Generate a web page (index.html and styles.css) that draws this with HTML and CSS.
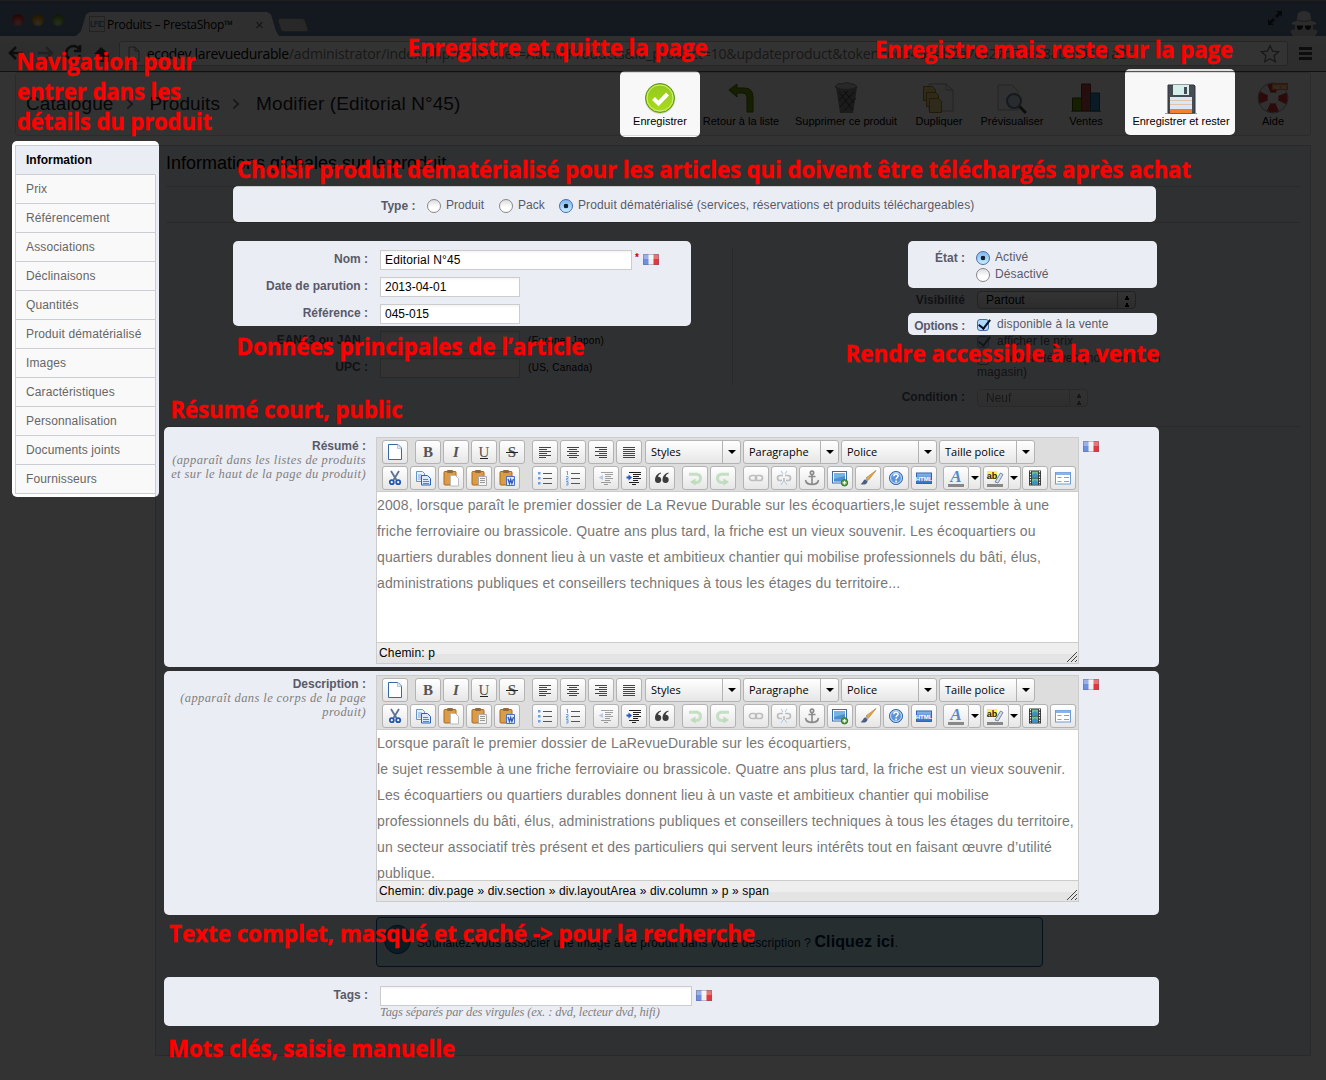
FILE: index.html
```html
<!DOCTYPE html>
<html lang="fr">
<head>
<meta charset="utf-8">
<title>Produits – PrestaShop™</title>
<link rel="stylesheet" href="styles.css">
</head>
<body>
<svg class="sprite" width="0" height="0">
  <defs>
    <linearGradient id="g-blue" x1="0" y1="0" x2="0" y2="1"><stop offset="0" stop-color="#8db9ee"/><stop offset="1" stop-color="#2f6fbf"/></linearGradient>
    <linearGradient id="g-green" x1="0" y1="0" x2="0" y2="1"><stop offset="0" stop-color="#94c81e"/><stop offset="1" stop-color="#a9dc1b"/></linearGradient>
    <symbol id="i-new" viewBox="0 0 20 20"><path d="M3.500 2.500h9.500l3.500 3.500v11.500h-13z" fill="#fff" stroke="#36699f"/><path d="M12.500 2.500v4h4" fill="#dfe9f5" stroke="#9bb6d3" stroke-width=".7"/></symbol>
    <symbol id="i-bold" viewBox="0 0 20 20"><text x="10" y="15" class="glyph glyph-b">B</text></symbol>
    <symbol id="i-italic" viewBox="0 0 20 20"><text x="10" y="15" class="glyph glyph-i">I</text></symbol>
    <symbol id="i-under" viewBox="0 0 20 20"><text x="10" y="15" class="glyph">U</text><path d="M6 16.500h8" stroke="#222"/></symbol>
    <symbol id="i-strike" viewBox="0 0 20 20"><text x="10" y="15" class="glyph glyph-b">S</text><path d="M4 10.500h12" stroke="#222"/></symbol>
    <symbol id="i-left" viewBox="0 0 20 20"><path d="M4 5.500h12M4 7.500h8M4 9.500h12M4 11.500h8M4 13.500h12M4 15.500h7" stroke="#444"/></symbol>
    <symbol id="i-center" viewBox="0 0 20 20"><path d="M4 5.500h12M6 7.500h8M4 9.500h12M6 11.500h8M4 13.500h12M6 15.500h8" stroke="#444"/></symbol>
    <symbol id="i-right" viewBox="0 0 20 20"><path d="M4 5.500h12M8 7.500h8M4 9.500h12M8 11.500h8M4 13.500h12M8 15.500h8" stroke="#444"/></symbol>
    <symbol id="i-full" viewBox="0 0 20 20"><path d="M4 5.500h12M4 7.500h12M4 9.500h12M4 11.500h12M4 13.500h12M4 15.500h12" stroke="#444"/></symbol>
    <symbol id="i-cut" viewBox="0 0 20 20"><path d="M6 3l5.500 9M14 3l-5.500 9" stroke="#5c7391" stroke-width="1.800"/><circle cx="6.800" cy="14.200" r="2" fill="#fff" stroke="#2356b0" stroke-width="1.800"/><circle cx="13.200" cy="14.200" r="2" fill="#fff" stroke="#2356b0" stroke-width="1.800"/></symbol>
    <symbol id="i-copy" viewBox="0 0 20 20"><path d="M3.500 3.500h6l2 2v8h-8z" fill="#e8f1fb" stroke="#6a93c8"/><path d="M5 7h4M5 9h4M5 11h4" stroke="#7ea6d8"/><path d="M8.500 7.500h6l3 3v6.500h-9z" fill="#dceafb" stroke="#2d62b0"/><path d="M10 11.500h5M10 13.500h6M10 15.500h6" stroke="#4d86cf"/></symbol>
    <symbol id="i-board" viewBox="0 0 20 20"><rect x="3" y="3.500" width="12" height="13.500" rx="1" fill="#dc9b45" stroke="#a8691f"/><rect x="6" y="2" width="6" height="3" rx="1" fill="#8d6a3d"/></symbol>
    <symbol id="i-paste" viewBox="0 0 20 20"><use href="#i-board"/><path d="M9.500 7.500h5l3 3v7.500h-8z" fill="#fff" stroke="#bbb"/></symbol>
    <symbol id="i-pastet" viewBox="0 0 20 20"><use href="#i-board"/><path d="M9.500 8.500h8v9h-8z" fill="#f4f4f4" stroke="#aaa"/><path d="M11 10.500h5M11 12.500h5M11 14.500h5" stroke="#999"/></symbol>
    <symbol id="i-pastew" viewBox="0 0 20 20"><use href="#i-board"/><path d="M9.500 8.500h8v9h-8z" fill="#e3ebfa" stroke="#4a6ec0"/><path d="M11 11l1.500 4.500 1.200-4 1.200 4L16.500 11" fill="none" stroke="#3257b5" stroke-width="1.300"/></symbol>
    <symbol id="i-ul" viewBox="0 0 20 20"><path d="M8 5.500h9M8 10.500h9M8 15.500h9" stroke="#555"/><path d="M3 4h2.500v2.500H3zM3 9h2.500v2.500H3zM3 14h2.500v2.500H3z" fill="#6f9fe0"/></symbol>
    <symbol id="i-ol" viewBox="0 0 20 20"><path d="M8 5.500h9M8 10.500h9M8 15.500h9" stroke="#555"/><path d="M4.500 3v4M3.500 3.500h1M3 8.500h2v2H3.500v1.500H5.500M3 13.500h2v3.500H3M3.500 15.200h1.500" fill="none" stroke="#6f9fe0"/></symbol>
    <symbol id="i-outdent" viewBox="0 0 20 20"><g opacity=".4"><path d="M5 4.500h12M9 6.500h8M9 8.500h6M9 10.500h8M9 12.500h5M5 14.500h10M8 16.500h4" stroke="#222"/><path d="M7 7v5L2.500 9.500z" fill="#6a90d0"/></g></symbol>
    <symbol id="i-indent" viewBox="0 0 20 20"><path d="M5 4.500h12M9 6.500h8M9 8.500h6M9 10.500h8M9 12.500h5M5 14.500h10M8 16.500h4" stroke="#222"/><path d="M2.500 9.500H5" stroke="#2558c4" stroke-width="2"/><path d="M4.500 6.500v6L8 9.500z" fill="#2558c4"/></symbol>
    <symbol id="i-quote" viewBox="0 0 20 20"><path d="M9 4.500C5 5.500 3 8.500 3 12a3.100 3.100 0 1 0 3-3.200C6.300 7 7.500 5.800 9 5.400zM16.500 4.500c-4 1-6 4-6 7.500a3.100 3.100 0 1 0 3-3.200c.3-1.800 1.500-3 3-3.400z" fill="#3c3c3c"/></symbol>
    <symbol id="i-undo" viewBox="0 0 20 20"><path d="M4 6.200h8a4.200 4.200 0 0 1 0 8.300H9" fill="none" stroke="#c4dfc4" stroke-width="3"/><path d="M10.500 10.500v7L5 14z" fill="#bcdcbc"/></symbol>
    <symbol id="i-redo" viewBox="0 0 20 20"><path d="M16 6.200H8a4.200 4.200 0 0 0 0 8.300h3" fill="none" stroke="#c4dfc4" stroke-width="3"/><path d="M10.500 10.500v7L16 14z" fill="#bcdcbc"/></symbol>
    <symbol id="i-link" viewBox="0 0 20 20"><g fill="none" stroke="#bdbdbd" stroke-width="1.700"><rect x="3.500" y="7.500" width="7" height="5" rx="2.500"/><rect x="9.500" y="7.500" width="7" height="5" rx="2.500"/></g></symbol>
    <symbol id="i-unlink" viewBox="0 0 20 20"><g fill="none" stroke="#bdbdbd" stroke-width="1.700"><path d="M9 7.500H6a2.500 2.500 0 0 0 0 5h2M11 7.500h3a2.500 2.500 0 0 1 0 5h-2M10 10v4"/></g><path d="M7 3l2 3M13 3l-2 3M7 17l2-3M13 17l-2-3" stroke="#a7c5ea"/></symbol>
    <symbol id="i-anchor" viewBox="0 0 20 20"><g fill="none" stroke="#8a8a8a" stroke-width="1.600"><circle cx="10" cy="4.800" r="1.700"/><path d="M10 6.500v10M6.500 8.500h7M3.500 12c.5 3 3 4.500 6.500 4.500s6-1.500 6.500-4.500"/></g></symbol>
    <symbol id="i-image" viewBox="0 0 20 20"><rect x="2.500" y="3.500" width="14" height="11.500" fill="#fff" stroke="#3a6baa"/><path d="M4 5h11v8.500H4z" fill="#74b3e4"/><path d="M4 11l11-3v5.500H4z" fill="#4b8fcc"/><circle cx="14.500" cy="14.800" r="3.200" fill="#5aa345" stroke="#33752a"/><path d="M12.700 14.800h3.600M14.500 13v3.600" stroke="#fff" stroke-width="1.200"/></symbol>
    <symbol id="i-brush" viewBox="0 0 20 20"><path d="M18 2.500l-7.500 9.500-2.500-2z" fill="#e4a94b" stroke="#b67b2a" stroke-width=".7"/><path d="M8.500 10l2.300 1.800-1.500 1.800-2.200-1.900z" fill="#aaa"/><path d="M7 11.500c-2 .5-1.500 3-4.500 4.500 3 1.200 7 .5 7-2.800z" fill="#4c5f80"/></symbol>
    <symbol id="i-help" viewBox="0 0 20 20"><circle cx="10" cy="10" r="6.600" fill="#5d93d8" stroke="#3d6fae"/><circle cx="10" cy="10" r="5.400" fill="none" stroke="#c9def5"/><path d="M7.800 8.200c0-3 4.500-2.700 4.300-.2-.1 1.500-2 1.600-2 3.300M10.100 12.600v1.600" fill="none" stroke="#fff" stroke-width="1.600"/></symbol>
    <symbol id="i-html" viewBox="0 0 20 20"><rect x="2.500" y="5" width="15" height="10.500" fill="url(#g-blue)" stroke="#2f66b0"/><text x="10" y="13" class="tag">HTML</text></symbol>
    <symbol id="i-color" viewBox="0 0 20 20"><text x="10" y="14" class="glyph glyph-a">A</text><path d="M2 16h16v3H2z" fill="#888"/></symbol>
    <symbol id="i-hilite" viewBox="0 0 20 20"><path d="M2 3h10v8H2z" fill="#fbf04f"/><text x="7" y="11" class="ab">ab</text><path d="M10 14l5.500-9 2.500 1.500-5 8.500z" fill="#d5dcea" stroke="#5b6f95" stroke-width=".8"/><path d="M2 16h16v3H2z" fill="#888"/></symbol>
    <symbol id="i-media" viewBox="0 0 20 20"><path d="M4 2.500h12v15H4z" fill="#333"/><path d="M7 3.500h6v6H7zM7 10.500h6v6H7z" fill="#6fc08b"/><path d="M7 7l3-2 3 2v2.500H7zM7 14l3-2 3 2v2.500H7z" fill="#3d90c8"/><path d="M5.500 3v14M14.500 3v14" stroke="#eee" stroke-width="1.200" stroke-dasharray="1.500 1.200"/></symbol>
    <symbol id="i-tmpl" viewBox="0 0 20 20"><rect x="2.500" y="4.500" width="15" height="11.500" fill="#fff" stroke="#6f9bd4"/><path d="M3 4.500h14v2.500H3z" fill="#8cb2e6"/><path d="M4.500 9.500h4M4.500 13.500h4M11 9.500h5M11 13.500h5" stroke="#7aa4da" stroke-width="1.200"/></symbol>
    <symbol id="i-flag" viewBox="0 0 16 11"><path d="M0 0h6v11H0z" fill="#6d8fe0"/><path d="M5.500 0h5v11h-5z" fill="#f0efec"/><path d="M10.500 0H16v11h-5.500z" fill="#e0383d"/><path d="M0 0h16v5H0z" fill="#fff" opacity=".3"/><path d="M.5.500h15v10H.5z" fill="none" stroke="#605a80" stroke-opacity=".35"/></symbol>
  </defs>
</svg>

<header class="browser">
  <div class="tabs">
    <i class="light red"></i><i class="light amber"></i><i class="light green"></i>
    <div class="tab"><span class="favicon">LRD</span><span class="tab-title">Produits – PrestaShop™</span><span class="tab-x">×</span></div>
    <i class="newtab"></i>
    <svg class="expand" width="16" height="16"><path d="M9 1h6v6l-2-2-3 3-2-2 3-3zM7 15H1V9l2 2 3-3 2 2-3 3z" fill="#20252d"/></svg>
    <svg class="spy" width="30" height="26"><path d="M9 3q6-4 12 0l1.500 8q4 .5 5.500 3l-5 1q-8 2-16 0l-5-1q1.500-2.500 5.500-3z" fill="#ddd"/><path d="M7 10q8 3 16 0" stroke="#888" fill="none"/><path d="M6 14q9 3 18 0v5l5 2-3 5H4l-3-5 5-2z" fill="#c9c9c9"/><path d="M8 15.500h6v1.500q-1 3-3.500 3T8 17zM16 15.500h6V17q-.5 3-3 3T16 17z" fill="#222"/></svg>
  </div>
  <div class="navbar">
    <svg class="navicons" width="100" height="24" fill="none" stroke-width="2.600"><path d="M15 11H3M8 5l-6 6 6 6" stroke="#444"/><path d="M30 11h13M38 5l6 6-6 6" stroke="#a5a5a5"/><path d="M71 7a7 7 0 1 0 1 6M72 3v6h-6" stroke="#444"/><path d="M86 12l7-7 8 7v8H88v-8z" fill="#444" stroke="none"/></svg>
    <div class="url">
      <svg width="12" height="16"><path d="M1 1h6l4 4v10H1zM7 1v4h4" fill="none" stroke="#888"/></svg>
      <span class="address"><b>ecodev.larevuedurable</b>/administrator/index.php?controller=AdminProducts&amp;id_product=10&amp;updateproduct&amp;token=ede45b4b2e7ce27d7c808abdf9671a2c</span>
      <svg class="star" width="20" height="19"><path d="M10 1.500l2.600 5.600 6 .7-4.500 4 1.300 6-5.400-3-5.400 3 1.300-6-4.500-4 6-.7z" fill="none" stroke="#777" stroke-width="1.300"/></svg>
    </div>
    <i class="burger"></i>
  </div>
</header>

<section class="pagehead">
  <h1 class="crumbs"><span>Catalogue</span><i></i><span>Produits</span><i></i><span>Modifier (Editorial N°45)</span></h1>
  <div class="actions">
    <a><svg width="32" height="32"><circle cx="16" cy="17" r="15" fill="#9b9b9b" opacity=".4"/><circle cx="16" cy="16" r="14.500" fill="url(#g-green)" stroke="#5a9a10"/><circle cx="16" cy="16" r="13" fill="none" stroke="#d2ee83"/><path d="M9.500 16.500l5 5 9-9.500" fill="none" stroke="#fff" stroke-width="4"/></svg>Enregistrer</a>
    <a><svg width="32" height="32"><path d="M4 8l8-6v4h7q9 0 9 9v15h-6V15q0-4-4-4h-6v4z" fill="#6d9d00" stroke="#486800"/></svg>Retour à la liste</a>
    <a><svg width="32" height="32"><path d="M6 5h21l-4 26H10z" fill="#858585"/><path d="M9 10l14 18M14 9l10 12M24 10L10 25M18 9l-9 9M26 16L14 29" stroke="#444"/><path d="M5 5q3-5 7-3 5-3 9 0 4-1 6 3-11 5-22 0z" fill="#c5c5c5" stroke="#888"/></svg>Supprimer ce produit</a>
    <a><svg width="32" height="32"><path d="M6 2h17l7 6v21H6z" fill="#f4f4f4" stroke="#aaa"/><path d="M23 2v6h7" fill="none" stroke="#aaa"/><g fill="#eed386" stroke="#a8811c"><path d="M.5 4.500h9l3 3v11H.500z"/><path d="M3.500 10.500h9l3 3v11h-12z"/><path d="M6.500 16.500h9l3 3v11h-12z"/></g></svg>Dupliquer</a>
    <a><svg width="32" height="32"><path d="M2 3h14l6 6v19H2z" fill="#f2f2f2" stroke="#b5b5b5"/><path d="M23 24l7 7" stroke="#444" stroke-width="3"/><circle cx="18" cy="19" r="7" fill="#c5d9ec" stroke="#6d819c" stroke-width="2"/></svg>Prévisualiser</a>
    <a><svg width="32" height="32"><path d="M2.500 16h9v13h-9z" fill="#70a000" stroke="#365500"/><path d="M11.500 2h9v27h-9z" fill="#c04545" stroke="#851f1f"/><path d="M20.500 11h9v18h-9z" fill="#3686b8" stroke="#145579"/><path d="M1 29.500h30" stroke="#777"/></svg>Ventes</a>
    <a><svg width="32" height="32"><path d="M0 31.500h32" stroke="#999"/><path d="M3 3h26l1 1v27H3z" fill="#474b54" stroke="#30343b"/><path d="M8 3h16v10H8z" fill="#d4efea"/><path d="M19 5h3v7h-3z" fill="#454b55"/><path d="M5 15h22v12H5z" fill="#d8e8fa"/><path d="M5 18.500h22M5 22.500h22" stroke="#e6b48a" opacity=".7"/><path d="M5 27h22v4H5z" fill="#ef8132"/></svg>Enregistrer et rester</a>
    <a><svg width="32" height="32"><circle cx="16" cy="16" r="10" fill="none" stroke="#eee" stroke-width="9"/><circle cx="16" cy="16" r="10" fill="none" stroke="#d93333" stroke-width="9" stroke-dasharray="8.700 7" stroke-dashoffset="4.300"/><circle cx="16" cy="16" r="15" fill="none" stroke="#999"/><path d="M15 1h16v7H15z" fill="#f0803a"/><text x="23" y="7" class="tag">NEW</text></svg>Aide</a>
  </div>
</section>

<main class="main">
  <nav class="side">
    <a class="on">Information</a><a>Prix</a><a>Référencement</a><a>Associations</a><a>Déclinaisons</a><a>Quantités</a><a>Produit dématérialisé</a><a>Images</a><a>Caractéristiques</a><a>Personnalisation</a><a>Documents joints</a><a>Fournisseurs</a>
  </nav>
  <section class="panel">
    <h2>Informations globales sur le produit</h2>
    <div class="type">
      <b>Type :</b><i class="radio"></i><span class="t1">Produit</span><i class="radio"></i><span class="t2">Pack</span><i class="radio on"></i><span class="t3">Produit dématérialisé (services, réservations et produits téléchargeables)</span>
    </div>
    <div class="cols">
      <div class="left">
        <div class="row"><label>Nom :</label><span class="input wide">Editorial N°45</span><sup>*</sup><svg width="16" height="11"><use href="#i-flag"/></svg></div>
        <div class="row"><label>Date de parution :</label><span class="input">2013-04-01</span></div>
        <div class="row"><label>Référence :</label><span class="input">045-015</span></div>
        <div class="row"><label>EAN13 ou JAN :</label><span class="input"></span><small>(Europe, Japon)</small></div>
        <div class="row"><label>UPC :</label><span class="input"></span><small>(US, Canada)</small></div>
      </div>
      <div class="right">
        <label>État :</label>
        <div class="state"><p><i class="radio on"></i>Activé</p><p><i class="radio"></i>Désactivé</p></div>
        <label class="lv">Visibilité</label>
        <div class="select s-vis"><span>Partout</span><i></i></div>
        <label class="lo">Options :</label>
        <div class="opts"><p><i class="check on"></i>disponible à la vente</p><p><i class="check on"></i>afficher le prix</p><p><i class="check"></i>exclusivité web (non vendu en</p><p>magasin)</p></div>
        <label class="lc">Condition :</label>
        <div class="select s-cond"><span>Neuf</span><i></i></div>
      </div>
    </div>
    <div class="field">
      <div class="legend"><b>Résumé :</b><em>(apparaît dans les listes de produits</em><em>et sur le haut de la page du produit)</em></div>
      <div class="editor">
        <div class="bars"></div>
        <div class="text"><p>2008, lorsque paraît le premier dossier de La Revue Durable sur les écoquartiers,le sujet ressemble à une</p><p>friche ferroviaire ou brassicole. Quatre ans plus tard, la friche est un vieux souvenir. Les écoquartiers ou</p><p>quartiers durables donnent lieu à un vaste et ambitieux chantier qui mobilise professionnels du bâti, élus,</p><p>administrations publiques et conseillers techniques à tous les étages du territoire...</p></div>
        <div class="status"><span>Chemin: p</span><svg width="12" height="12"><path d="M1 11L11 1M5 11l6-6M9 11l2-2" stroke="#444"/></svg></div>
      </div>
      <svg class="flag" width="16" height="11"><use href="#i-flag"/></svg>
    </div>
    <div class="field">
      <div class="legend"><b>Description :</b><em>(apparaît dans le corps de la page</em><em>produit)</em></div>
      <div class="editor">
        <div class="bars"></div>
        <div class="text"><p>Lorsque paraît le premier dossier de LaRevueDurable sur les écoquartiers,</p><p>le sujet ressemble à une friche ferroviaire ou brassicole. Quatre ans plus tard, la friche est un vieux souvenir.</p><p>Les écoquartiers ou quartiers durables donnent lieu à un vaste et ambitieux chantier qui mobilise</p><p>professionnels du bâti, élus, administrations publiques et conseillers techniques à tous les étages du territoire,</p><p>un secteur associatif très présent et des particuliers qui servent leurs intérêts tout en faisant œuvre d’utilité</p><p>publique.</p></div>
        <div class="status"><span>Chemin: div.page » div.section » div.layoutArea » div.column » p » span</span><svg width="12" height="12"><path d="M1 11L11 1M5 11l6-6M9 11l2-2" stroke="#444"/></svg></div>
      </div>
      <svg class="flag" width="16" height="11"><use href="#i-flag"/></svg>
    </div>
    <div class="hint"><i>i</i><span>Souhaitez-vous associer une image à ce produit dans votre description ? <b>Cliquez ici</b>.</span></div>
    <div class="tags"><label>Tags :</label><div><span class="input"></span><em>Tags séparés par des virgules (ex. : dvd, lecteur dvd, hifi)</em></div><svg width="16" height="11"><use href="#i-flag"/></svg></div>
  </section>
</main>

<svg class="guide" width="1326" height="1080" viewBox="0 0 1326 1080">
  <defs>
    <mask id="spots">
      <path d="M0 0h1326v1080H0z" fill="#fff"/>
      <g fill="#000">
        <rect x="12" y="141" width="147" height="356" rx="5"/>
        <rect x="620" y="71" width="80" height="66" rx="5"/>
        <rect x="1125" y="69" width="110" height="66" rx="5"/>
        <rect x="233" y="186" width="923" height="36" rx="5"/>
        <rect x="233" y="241" width="458" height="85" rx="5"/>
        <rect x="908" y="241" width="249" height="47" rx="5"/>
        <rect x="908" y="313" width="249" height="22" rx="5"/>
        <rect x="164" y="427" width="995" height="240" rx="5"/>
        <rect x="164" y="671" width="995" height="244" rx="5"/>
        <rect x="164" y="977" width="995" height="49" rx="5"/>
      </g>
    </mask>
  </defs>
  <path d="M0 0h1326v1080H0z" fill-opacity=".8" mask="url(#spots)"/>
  <g class="notes">
    <text x="16.500" y="70" textLength="179" lengthAdjust="spacingAndGlyphs">Navigation pour</text>
    <text x="17" y="100" textLength="164" lengthAdjust="spacingAndGlyphs">entrer dans les</text>
    <text x="17" y="130" textLength="195" lengthAdjust="spacingAndGlyphs">détails du produit</text>
    <text x="407.500" y="56" textLength="300" lengthAdjust="spacingAndGlyphs">Enregistre et quitte la page</text>
    <text x="875" y="58" textLength="358" lengthAdjust="spacingAndGlyphs">Enregistre mais reste sur la page</text>
    <text x="237" y="178" textLength="954" lengthAdjust="spacingAndGlyphs">Choisir produit dématérialisé pour les articles qui doivent être téléchargés après achat</text>
    <text x="236.500" y="355" textLength="348" lengthAdjust="spacingAndGlyphs">Données principales de l’article</text>
    <text x="845.500" y="362" textLength="314" lengthAdjust="spacingAndGlyphs">Rendre accessible à la vente</text>
    <text x="170.500" y="418" textLength="232" lengthAdjust="spacingAndGlyphs">Résumé court, public</text>
    <text x="169" y="942" textLength="586" lengthAdjust="spacingAndGlyphs">Texte complet, masqué et caché -&gt; pour la recherche</text>
    <text x="168" y="1057" textLength="287" lengthAdjust="spacingAndGlyphs">Mots clés, saisie manuelle</text>
  </g>
</svg>
<script src="toolbar.js"></script>
</body>
</html>
```
FILE: styles.css
```css
* { box-sizing: border-box; }
body { margin: 0; width: 1326px; height: 1080px; overflow: hidden; background: #fff; font: 12px/17px "Liberation Sans", Arial, sans-serif; color: #585a69; position: relative; }
p, h1, h2 { margin: 0; font-weight: normal; }
.sprite { display: block; height: 0; }
.glyph { font: 15px "Liberation Serif", serif; fill: #555; text-anchor: middle; }
.glyph-b { font-weight: bold; }
.glyph-i { font-style: italic; font-weight: bold; }
.glyph-a { font-size: 17px; font-style: italic; font-weight: bold; fill: #5487d0; }
.tag { font: bold 6px "Liberation Sans", sans-serif; fill: #fff; text-anchor: middle; }
.ab { font: bold 9px "Liberation Sans", sans-serif; text-anchor: middle; fill: #222; }

/* browser chrome */
.browser { height: 72px; border-bottom: 1px solid #555; }
.tabs { height: 36px; background: linear-gradient(#60708a, #687d9b 3px, #627a9b 35px); display: flex; align-items: center; border-top: 1px solid #999; padding-left: 12px; }
.light { width: 12px; height: 12px; border-radius: 6px; margin: 2px 8px 0 0; }
.red { background: radial-gradient(circle at 50% 75%, #f99, #c22 70%); }
.amber { background: radial-gradient(circle at 50% 75%, #fd9, #b70 70%); }
.green { background: radial-gradient(circle at 50% 75%, #be9, #582 70%); }
.tab { width: 203px; height: 24px; margin: 11px 0 0 4px; background: #ececec; clip-path: polygon(0 100%, 5px 80%, 10px 10%, 14px 0, 191px 0, 195px 10%, 200px 80%, 203px 100%); display: flex; align-items: center; color: #000; }
.favicon { margin-left: 13px; width: 16px; height: 16px; border: 1px solid #aaa; color: #3579ac; font-size: 9px; line-height: 14px; letter-spacing: -1.200px; overflow: hidden; }
.tab-title { font: 12px "Open Sans", sans-serif; margin-left: 2px; width: 126px; white-space: nowrap; letter-spacing: -.3px; }
.tab-x { margin-left: 22px; font-size: 15px; color: #666; }
.newtab { width: 28px; height: 14px; background: #c8c8c8; border: 1px solid #888; border-radius: 3px; transform: skewX(18deg); margin: 12px 0 0 0; }
.expand { margin: -1px 6px 0 auto; }
.spy { margin: 9px 7px 0 0; }
.navbar { height: 35px; background: linear-gradient(#eaeaea, #dedede); display: flex; align-items: center; padding: 0 14px 0 8px; }
.navicons { width: 103px; margin-right: 8px; }
.url { width: 1172px; height: 25px; background: #fff; border: 1px solid #bbb; border-radius: 3px; display: flex; align-items: center; padding: 0 4px 0 8px; }
.address { font: 14px/20px "Open Sans", sans-serif; color: #777; margin-left: 7px; white-space: nowrap; letter-spacing: -.15px; }
.address b { font-weight: normal; color: #000; letter-spacing: -.33px; }
.star { margin: 0 3px 0 auto; }
.burger { width: 13px; height: 13px; margin-left: 11px; border-top: 3px solid #444; border-bottom: 3px solid #444; background: linear-gradient(#444, #444) 0 2px / 13px 3px no-repeat; }

/* breadcrumb and page actions */
.pagehead { height: 64px; margin: 0 15px; border: 1px solid #d8d8d8; border-radius: 3px; background: #f8f8f8; display: flex; justify-content: space-between; }
.crumbs { display: flex; align-items: center; padding-left: 10px; font-size: 19px; color: #222; letter-spacing: .1px; height: 60px; }
.crumbs i { width: 8px; height: 8px; border: solid #777; border-width: 2px 2px 0 0; transform: rotate(45deg) scale(.95); margin: 2px 18px 0 10px; }
.actions { display: grid; grid-template-columns: 80px 82px 128px 58px 88px 60px 130px 54px; margin-right: 10px; }
.actions a { display: flex; flex-direction: column; align-items: center; padding-top: 9px; font-size: 11px; line-height: 14px; color: #000; white-space: nowrap; }
.actions svg { flex: none; }

/* side navigation */
.main { display: flex; align-items: flex-start; margin: 9px 15px 0; }
.side { width: 141px; border: solid #ccced7; border-width: 1px 0 1px 1px; position: relative; letter-spacing: .13px; }
.side a { display: block; height: 29px; line-height: 28px; padding-left: 10px; background: #f9f9f9; border-bottom: 1px solid #ccced7; border-right: 1px solid #ccced7; color: #666; white-space: nowrap; }
.side a:last-child { height: 28px; border-bottom: 0; }
.side a.on { background: #ebedf4; color: #000; font-weight: bold; border-right-color: #ebedf4; letter-spacing: 0; }

/* product form */
.panel { width: 1156px; height: 911px; margin-left: -1px; background: #ebedf4; border: 1px solid #ccced7; padding: 0 10px; }
.panel h2 { height: 41px; padding-top: 7px; line-height: 20px; font-size: 18px; color: #000; border-bottom: 1px solid #ccc; }
.type { height: 36px; border-bottom: 1px solid #ccc; display: flex; align-items: center; padding-left: 215px; line-height: 16px; white-space: nowrap; }
.type b { width: 46px; padding-top: 2px; }
.radio { flex: none; display: inline-block; width: 14px; height: 14px; border: 1px solid #888; border-radius: 50%; background: linear-gradient(#ddd, #fff 60%); margin-top: 2px; }
.radio.on { background: radial-gradient(circle, #123 0 2px, #9cf0 2.600px), linear-gradient(#84b6f0, #c5edff); border-color: #456cab; }
.type span { margin-left: 5px; }
.t1 { width: 53px; }
.t2 { width: 41px; }
.t3 { letter-spacing: .12px; }
.cols { display: flex; height: 204px; border-bottom: 1px solid #ccc; padding-top: 25px; }
.left { width: 567px; height: 137px; border-right: 1px solid #ccc; }
.row { display: flex; height: 27px; align-items: flex-start; }
.row label { width: 202px; margin-right: 12px; padding-top: 3px; text-align: right; }
label { font-weight: bold; white-space: nowrap; }
.input { display: block; width: 140px; height: 20px; margin-top: 2px; border: 1px solid #ccc; background: linear-gradient(#f4f4f4, #fff 3px); color: #000; padding-left: 4px; line-height: 19px; }
.input.wide { width: 252px; letter-spacing: .15px; }
.row sup { color: #c00; font-size: 10px; font-weight: bold; margin-left: 3px; line-height: 20px; }
.row svg { margin: 6px 0 0 4px; }
.row small { font-size: 10px; margin: 3px 0 0 8px; color: #000; letter-spacing: .3px; }
.right { display: grid; grid-template-columns: 232px 190px; column-gap: 12px; grid-template-rows: 41px 25px 71px 20px; align-items: start; }
.right label { text-align: right; padding-top: 2px; }
.state p, .opts p { display: flex; height: 17px; white-space: nowrap; letter-spacing: .1px; }
.state { padding-top: 1px; margin-left: -1px; }
.state p { gap: 5px; }
.right .lv { padding-top: 3px; }
.right .lo { padding-top: 4px; letter-spacing: -.2px; }
.right .lc { padding-top: 4px; }
.select { height: 18px; margin-top: 2px; border: 1px solid #aaa; border-radius: 4px; background: linear-gradient(#fff, #ddd); display: flex; justify-content: space-between; line-height: 16px; padding-left: 8px; color: #000; }
.select i { width: 18px; border-left: 1px solid #aaa; background: conic-gradient(from 153deg at 50% 0, #000 54deg, #0000 0) 50% 10px / 6px 5px no-repeat, conic-gradient(from 153deg at 50% 0, #000 54deg, #0000 0) 50% 3px / 6px 5px no-repeat; }
.s-vis { width: 159px; }
.s-cond { width: 111px; opacity: .5; margin-top: 4px; }
.opts { padding-top: 2px; }
.check { width: 12px; height: 12px; border: 1px solid #888; border-radius: 3px; margin: 3px 8px 0 0; background: #fff; position: relative; }
.check.on { background: #b0d8fa; border-color: #456cab; }
.check.on::after { content: ""; position: absolute; left: 3px; top: -3px; width: 5px; height: 10px; border: solid #012; border-width: 0 2px 2px 0; transform: rotate(38deg); }
.opts p:nth-child(2) .check { opacity: .6; }
.opts p:last-child { height: 14px; margin-top: -3px; }

/* rich text fields */
.field { display: flex; height: 238px; padding-top: 10px; }
.legend { width: 200px; margin-right: 10px; text-align: right; line-height: 14px; padding-top: 2px; }
.legend b, .legend em { display: block; white-space: nowrap; }
em { font: italic 12.500px/14px "Liberation Serif", serif; color: #7f7f7f; }
.legend em { letter-spacing: .4px; }
.editor { width: 703px; height: 227px; border: 1px solid #ccc; display: flex; flex-direction: column; background: #fff; }
.bars { height: 54px; background: #ddd; border-bottom: 1px solid #ccc; padding: 2px 0 0 5px; }
.bar { display: flex; gap: 2px; height: 24px; margin-bottom: 2px; }
.btn { flex: none; width: 26px; height: 24px; border: 1px solid #b3b3b3; border-radius: 3px; background: linear-gradient(#fff, #e6e6e6); display: flex; align-items: center; justify-content: center; }
.btn svg { width: 20px; height: 20px; flex: none; margin-left: -1px; }
.btn.drop { width: 12px; margin: 0 -.5px 0 -2px; border-left: 0; border-radius: 0 3px 3px 0; }
.drop::after, .arrow::after { content: ""; border: 4px solid transparent; border-top-color: #000; border-bottom: 0; }
.pick { display: flex; width: 96px; height: 24px; border: 1px solid #b3b3b3; border-radius: 3px; background: linear-gradient(#fff, #e6e6e6); color: #000; font: 11px/22px "Open Sans", sans-serif; padding-left: 5px; justify-content: space-between; white-space: nowrap; }
.arrow { width: 18px; border-left: 1px solid #b3b3b3; display: flex; align-items: center; justify-content: center; }
.text { height: 151px; overflow: hidden; font-size: 14px; line-height: 26px; color: #777; }
.text p { white-space: nowrap; letter-spacing: .14px; }
.status { height: 21px; border-top: 1px solid #ccc; background: linear-gradient(#eee 55%, #e4e4e4 55%); color: #000; display: flex; justify-content: space-between; align-items: flex-end; padding-left: 2px; line-height: 20px; letter-spacing: .15px; }
.flag { margin: 4px 0 0 4px; }

.hint { width: 667px; height: 50px; margin: 14px 0 0 210px; border: 1px solid #0f5596; border-radius: 4px; background: #bde3f0; color: #002040; display: flex; align-items: center; padding-left: 7px; white-space: nowrap; letter-spacing: .1px; }
.hint i { width: 27px; height: 29px; border-radius: 50%; border: 1px solid #157; background: #2f8fb5; color: #cde; font: bold 20px/27px "Liberation Serif", serif; text-align: center; margin: -6px 6px 0 0; }
.hint b { font-size: 16px; }
.tags { display: flex; margin-top: 17px; }
.tags label { width: 202px; margin-right: 12px; padding-top: 3px; text-align: right; }
.tags .input { width: 312px; }
.tags svg { margin: 6px 0 0 4px; }
.tags em { display: block; margin-top: -1px; letter-spacing: -.12px; }

/* help layer over the page */
.guide { position: absolute; left: 0; top: 0; }
.notes { font: bold 24px "Open Sans", sans-serif; fill: #f00; stroke: #f00; stroke-width: .4px; }
```
FILE: toolbar.js
```js
// Fills every rich text editor with the same two rows of controls.
const rowOne = ["new", "+7", "bold", "italic", "under", "strike", "+7", "left", "center", "right", "full", "+3", "Styles", "Paragraphe", "Police", "Taille police"];
const rowTwo = ["cut", "copy", "paste", "pastet", "pastew", "+12", "ul", "ol", "+7", "outdent", "indent", "quote", "+7", "undo", "redo", "+7", "link", "unlink", "anchor", "image", "brush", "help", "html", "+6", "color", "drop", "hilite", "drop", "media", "tmpl"];

function row(items) {
  let gap = 0;
  return '<div class="bar">' + items.map((name) => {
    if (name[0] === "+") { gap = Number(name.slice(1)) - 2; return ""; }
    const margin = gap ? ` style="margin-left:${gap}px"` : "";
    gap = 0;
    if (name === "drop") return '<span class="btn drop"></span>';
    if (/^[A-Z]/.test(name)) return `<span class="pick"${margin}>${name}<span class="arrow"></span></span>`;
    return `<span class="btn"${margin}><svg><use href="#i-${name}"/></svg></span>`;
  }).join("") + "</div>";
}

document.querySelectorAll(".bars").forEach((bars) => { bars.innerHTML = row(rowOne) + row(rowTwo); });
```
